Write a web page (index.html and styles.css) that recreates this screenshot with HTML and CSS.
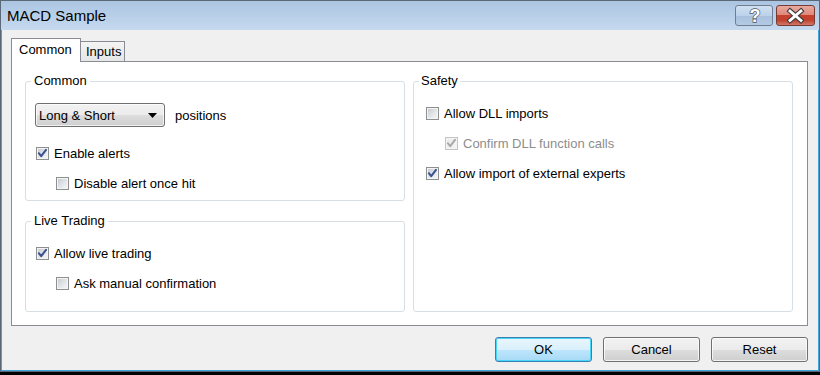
FILE: index.html
```html
<!DOCTYPE html>
<html>
<head>
<meta charset="utf-8">
<link rel="stylesheet" href="styles.css">
</head>
<body>
<div class="window">
  <div class="titlebar">
    <span class="title">MACD Sample</span>
    <div class="caption-btns">
      <div class="cap help">
        <svg width="38" height="21" viewBox="0 0 38 21"><text x="20" y="17" text-anchor="middle" class="qmark">?</text></svg>
      </div>
      <div class="cap close">
        <svg width="39" height="21" viewBox="0 0 39 21"><path d="M14 6 L25 15.5 M25 6 L14 15.5" class="x-out"/><path d="M14 6 L25 15.5 M25 6 L14 15.5" class="x-in"/></svg>
      </div>
    </div>
  </div>
  <div class="client">
    <div class="tabs">
      <div class="tab active">Common</div>
      <div class="tab">Inputs</div>
    </div>
    <div class="panel">
      <div class="col">
        <fieldset class="group g-common">
          <legend>Common</legend>
          <div class="body">
            <div class="row-select">
              <div class="select"><span>Long &amp; Short</span><svg width="9" height="5" viewBox="0 0 9 5"><path d="M0 0 H9 L4.5 5 Z" fill="#000"/></svg></div>
              <span class="after">positions</span>
            </div>
            <div class="check first"><span class="box checked"><svg viewBox="0 0 13 13"><path d="M2.8 6.2 L5.2 9.2 L10 2.8" class="tick"/></svg></span>Enable alerts</div>
            <div class="check sub"><span class="box"></span>Disable alert once hit</div>
          </div>
        </fieldset>
        <fieldset class="group g-live">
          <legend>Live Trading</legend>
          <div class="body">
            <div class="check"><span class="box checked"><svg viewBox="0 0 13 13"><path d="M2.8 6.2 L5.2 9.2 L10 2.8" class="tick"/></svg></span>Allow live trading</div>
            <div class="check sub"><span class="box"></span>Ask manual confirmation</div>
          </div>
        </fieldset>
      </div>
      <fieldset class="group g-safety">
        <legend>Safety</legend>
        <div class="body">
          <div class="check"><span class="box"></span>Allow DLL imports</div>
          <div class="check sub disabled"><span class="box checked"><svg viewBox="0 0 13 13"><path d="M2.8 6.2 L5.2 9.2 L10 2.8" class="tick"/></svg></span>Confirm DLL function calls</div>
          <div class="check"><span class="box checked"><svg viewBox="0 0 13 13"><path d="M2.8 6.2 L5.2 9.2 L10 2.8" class="tick"/></svg></span>Allow import of external experts</div>
        </div>
      </fieldset>
    </div>
    <div class="actions">
      <div class="btn default">OK</div>
      <div class="btn">Cancel</div>
      <div class="btn">Reset</div>
    </div>
  </div>
</div>
</body>
</html>
```
FILE: styles.css
```css
* { box-sizing: border-box; }
html, body { margin: 0; padding: 0; }
body {
  width: 820px;
  height: 375px;
  overflow: hidden;
  background: #000;
  font-family: "Liberation Sans", Arial, sans-serif;
  font-size: 13px;
  color: #000;
}
.window {
  width: 820px;
  height: 372px;
  border: 1px solid #5b6878;
  background: linear-gradient(#abc5e2, #c6daef 30px, #c6daef);
  display: flex;
  flex-direction: column;
}
.titlebar {
  height: 29px;
  flex: none;
  display: flex;
  justify-content: space-between;
  align-items: flex-start;
  padding: 0 4px 0 6px;
}
.title {
  font-size: 15px;
  line-height: 18px;
  margin-top: 6px;
  color: #000;
}
.caption-btns {
  display: flex;
  gap: 3px;
  margin-top: 4px;
}
.cap {
  height: 21px;
  border: 1px solid #6f7f91;
  border-radius: 3px;
  overflow: hidden;
}
.cap svg { display: block; margin: -1px; }
.help {
  width: 38px;
  background: linear-gradient(#cfe0f1, #bcd2ea 50%, #a7c0dc 51%, #b4cbe4);
}
.close {
  width: 39px;
  border-color: #7a3a34;
  background: linear-gradient(#e9a99e, #df8a7c 45%, #c5412d 50%, #c0422f 75%, #d2786a);
}
.qmark {
  font-family: "Liberation Sans", Arial, sans-serif;
  font-weight: bold;
  font-size: 18px;
  fill: #fff;
  stroke: #4a5563;
  stroke-width: 1.4px;
  paint-order: stroke;
}
.x-out { stroke: #3d3d3d; stroke-width: 5; stroke-linecap: square; fill: none; }
.x-in { stroke: #fff; stroke-width: 2.8; stroke-linecap: square; fill: none; }

.client {
  flex: 1;
  background: #f0f0f0;
  border: 1px solid #3ea6de;
  border-top: none;
  padding: 8px 10px 0 9px;
}
.tabs {
  display: flex;
  align-items: flex-end;
  height: 23px;
}
.tab {
  border: 1px solid #898c95;
  border-bottom: none;
  line-height: 16px;
}
.tab.active {
  width: 70px;
  height: 24px;
  margin-bottom: -1px;
  background: #fff;
  padding: 3px 0 0 7px;
  position: relative;
  z-index: 1;
}
.tab:not(.active) {
  width: 45px;
  height: 20px;
  margin-left: -1px;
  padding: 2px 0 0 5px;
  background: linear-gradient(#f4f4f4, #e6e6e6);
}
.panel {
  height: 265px;
  background: #fff;
  border: 1px solid #898c95;
  display: flex;
  gap: 8px;
  padding: 11px 0 0 13px;
}
.col {
  display: flex;
  flex-direction: column;
  gap: 12px;
}
.group {
  margin: 0;
  padding: 0;
  width: 380px;
  min-width: 0;
  border: 1px solid #d5dfe5;
  border-radius: 3px;
}
.group legend {
  margin-left: 5px;
  padding: 0 3px;
  line-height: 16px;
  font-size: 13px;
}
.g-safety legend { margin-left: 5px; padding: 0 2px; }
.g-common { height: 128px; }
.g-live { height: 99px; }
.g-safety { height: 239px; }
.body {
  display: flex;
  flex-direction: column;
  gap: 14px;
  padding: 16px 9px 0;
}
.g-common .body { padding-top: 14px; gap: 0; }
.g-common .check.first { margin-top: 18px; }
.g-common .check.sub { margin-top: 14px; }
.g-safety .body { padding-left: 12px; }
.row-select {
  display: flex;
  align-items: center;
  height: 24px;
}
.select {
  width: 130px;
  height: 24px;
  border: 1px solid #707070;
  border-radius: 3px;
  background: linear-gradient(#f2f2f2, #ebebeb 50%, #dddddd 51%, #cfcfcf);
  display: flex;
  align-items: center;
  justify-content: space-between;
  padding: 0 7px 0 3px;
  box-shadow: inset 0 0 0 1px rgba(255,255,255,0.7);
}
.select svg { display: block; }
.after { margin-left: 10px; }
.check {
  display: flex;
  align-items: center;
  height: 16px;
  gap: 5px;
  padding-left: 1px;
  white-space: nowrap;
}
.check.sub { padding-left: 21px; }
.g-safety .check { padding-left: 0; }
.g-safety .check.sub { padding-left: 19px; }
.box {
  width: 13px;
  height: 13px;
  flex: none;
  border: 1px solid #8e8f8f;
  background: linear-gradient(135deg, #c4c8ce, #e6e8eb 60%, #f8f8f8);
  box-shadow: inset 0 0 0 1px #f4f4f4;
  position: relative;
}
.box svg { position: absolute; left: -1px; top: -1px; width: 13px; height: 13px; }
.tick { fill: none; stroke: #3a518f; stroke-width: 2; stroke-linecap: round; stroke-linejoin: round; }
.disabled { color: #8d8d8d; }
.disabled .box {
  border-color: #c4c4c4;
  background: linear-gradient(135deg, #e8eaec, #f6f6f6);
}
.disabled .tick { stroke: #a9a9a9; }
.actions {
  display: flex;
  justify-content: flex-end;
  gap: 11px;
  margin-top: 11px;
}
.btn {
  width: 97px;
  height: 25px;
  border: 1px solid #707070;
  border-radius: 3px;
  background: linear-gradient(#f2f2f2, #ebebeb 50%, #dddddd 51%, #cfcfcf);
  box-shadow: inset 0 0 0 1px rgba(255,255,255,0.75);
  display: flex;
  align-items: center;
  justify-content: center;
  line-height: 16px;
}
.btn.default {
  border-color: #3c7fb1;
  background: linear-gradient(#eaf6fd, #d9f0fc 50%, #bee6fd 51%, #a7d9f5);
  box-shadow: inset 0 0 0 1px #48d5fa;
}
```
